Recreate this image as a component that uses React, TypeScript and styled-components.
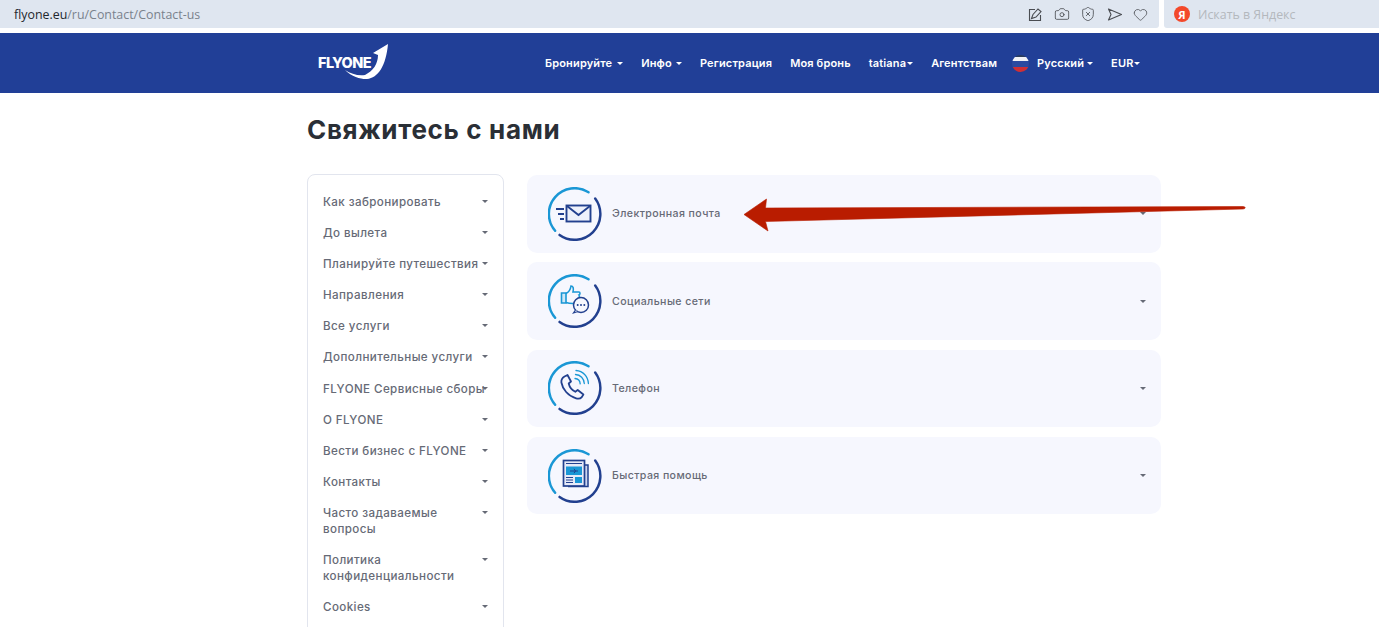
import React from "react";
import styled, { createGlobalStyle } from "styled-components";
import { Camera, ShieldX, Heart } from "lucide-react";

const Global = createGlobalStyle`
  html, body { margin: 0; padding: 0; background: #fff; }
  body { width: 1379px; height: 627px; overflow: hidden; font-family: Inter, "Noto Sans", sans-serif; }
`;

const Page = styled.div`
  position: relative;
  width: 1379px;
  height: 627px;
  overflow: hidden;
`;

const BrowserBar = styled.div`
  display: flex;
  gap: 5px;
  height: 28px;
  margin-bottom: 5px;
`;

const AddressBar = styled.div`
  flex: 0 0 1159px;
  display: flex;
  align-items: center;
  justify-content: space-between;
  box-sizing: border-box;
  padding: 0 11px 0 14px;
  background: #dfe6f0;
  border-bottom-right-radius: 3px;
`;

const Url = styled.div`
  font-family: "Open Sans", sans-serif;
  font-size: 12.4px;
  color: #7a828c;
  b { font-weight: 400; color: #23272c; }
`;

const BarIcons = styled.div`
  display: flex;
  align-items: center;
  gap: 10.5px;
  color: #4a4d52;
`;

const SearchBar = styled.div`
  flex: 1;
  display: flex;
  align-items: center;
  gap: 8px;
  padding-left: 10px;
  background: #dfe6f0;
  border-bottom-left-radius: 3px;
  font-family: "Open Sans", sans-serif;
  font-size: 12.4px;
  color: #b4b8bd;
`;

const YaBadge = styled.span`
  display: flex;
  align-items: center;
  justify-content: center;
  width: 16px;
  height: 16px;
  border-radius: 50%;
  background: #f3492b;
  color: #fff;
  font-size: 11px;
  font-weight: 700;
`;

const Header = styled.header`
  height: 60px;
  background: #213f97;
  display: flex;
  align-items: center;
  padding-left: 318px;
`;

const Logo = styled.div`
  position: relative;
  width: 227px;
  color: #fff;
  font-size: 14.5px;
  font-weight: 800;
  letter-spacing: -0.6px;
  line-height: 16px;
`;

const LogoMark = styled.svg`
  position: absolute;
  left: 22px;
  top: -15px;
`;

const Nav = styled.nav`
  display: flex;
  align-items: center;
  gap: 18px;
`;

const NavItem = styled.span<{ $gap?: number }>`
  display: inline-flex;
  align-items: center;
  gap: ${(p) => p.$gap ?? 4}px;
  color: #fff;
  font-size: 11px;
  font-weight: 600;
  letter-spacing: 0.15px;
  white-space: nowrap;
`;

const Caret = styled.i<{ $color?: string }>`
  display: inline-block;
  flex: none;
  width: 0;
  height: 0;
  border-left: 3px solid transparent;
  border-right: 3px solid transparent;
  border-top: 3px solid ${(p) => p.$color ?? "#fff"};
`;

const Flag = styled.span`
  width: 17px;
  height: 17px;
  border-radius: 50%;
  margin: 0 5px 0 -3px;
  background: linear-gradient(#2a3c5e 0 12%, #f1f2f6 12% 38%, #2b4aa0 38% 68%, #cf2f35 68% 100%);
`;

const Main = styled.main`
  width: 854px;
  margin-left: 307px;
`;

const Title = styled.h1`
  margin: 22px 0 29px;
  font-size: 26px;
  line-height: 30px;
  font-weight: 700;
  color: #2a2f36;
  letter-spacing: 0.65px;
`;

const Columns = styled.div`
  display: flex;
  align-items: flex-start;
  gap: 23px;
`;

const Sidebar = styled.aside`
  flex: 0 0 197px;
  min-width: 0;
  box-sizing: border-box;
  display: flex;
  flex-direction: column;
  gap: 15.1px;
  padding: 19px 15px 40px;
  border: 1px solid #e2e5ee;
  border-radius: 8px;
`;

const SideItem = styled.div`
  display: flex;
  justify-content: space-between;
  align-items: flex-start;
  font-size: 11.6px;
  line-height: 16px;
  font-weight: 500;
  letter-spacing: 0.4px;
  color: #666a76;
  span { flex: 1; width: 0; min-width: 0; white-space: pre; }
  i { margin-top: 6px; }
`;

const Cards = styled.section`
  flex: 1;
  min-width: 0;
  display: flex;
  flex-direction: column;
  gap: 9.75px;
  padding-top: 1px;
`;

const Card = styled.div`
  display: flex;
  align-items: center;
  box-sizing: border-box;
  height: 77.5px;
  padding: 0 15px 0 21px;
  background: #f6f7fe;
  border-radius: 10px;
`;

const CardIcon = styled.svg`
  flex: none;
  margin-right: 10px;
`;

const CardLabel = styled.span`
  flex: 1;
  font-size: 10.6px;
  font-weight: 500;
  color: #666a76;
  letter-spacing: 0.4px;
`;

const ArrowOverlay = styled.svg`
  position: absolute;
  left: 0;
  top: 0;
  pointer-events: none;
`;

const navy = "#22408f";
const sky = "#1a97d5";

const Ring = () => (
  <g fill="none" strokeWidth="2.4" strokeLinecap="round" transform="translate(26.6 27) scale(1.03) translate(-27 -27)">
    <path d="M40.5 5.9A25 25 0 0 0 8.1 43.3" stroke={sky} />
    <path d="M47 12A25 25 0 0 1 12.4 47.3" stroke={navy} />
  </g>
);

const IconBase = ({ children }: { children: React.ReactNode }) => (
  <CardIcon width="54" height="54" viewBox="0 0 54 54">
    <Ring />
    {children}
  </CardIcon>
);

const MailIcon = () => (
  <IconBase>
    <rect x="18.5" y="18.5" width="24" height="16" fill="#eef1fb" stroke={navy} strokeWidth="1.9" />
    <path d="M19 19l11.500 9 11.500-9" fill="none" stroke={navy} strokeWidth="1.9" />
    <path d="M8 22h8M10 27h6M12 32h4" stroke={navy} strokeWidth="1.8" />
  </IconBase>
);

const SocialIcon = () => (
  <IconBase>
    <path d="M13.5 19h4.500v10h-4.500z" fill="#cfe8f7" stroke={sky} strokeWidth="1.6" />
    <path d="M18 19.500c3-1.500 4.500-4 5-7.500 2 0 3 2 2 6h6c1.200 0 1.400 2.600 0 3 .800 1 .400 2.600-.600 2.800M18 28.500c3 1 5 1 7 1" fill="none" stroke={sky} strokeWidth="1.6" />
    <circle cx="33" cy="31" r="7.500" fill="#f6f7fe" stroke={navy} strokeWidth="1.500" />
    <path d="M27.500 36l-2 3 4.500-1.500" fill="#f6f7fe" stroke={navy} strokeWidth="1.200" />
    <circle cx="29.700" cy="31" r="1" fill={navy} />
    <circle cx="33" cy="31" r="1" fill={navy} />
    <circle cx="36.300" cy="31" r="1" fill={navy} />
  </IconBase>
);

const PhoneIcon = () => (
  <IconBase>
    <path d="M16.500 15.500l3-1.500 3.500 6.500-2.300 2c.800 3.400 3.400 6.800 6.600 8.300l2.400-1.800 5.700 4.500-1.600 2.600c-1.400 1.600-3.600 1.900-5.700 1.200C20 35 14.500 28 13.400 21.500c-.300-2.500 1-4.800 3.100-6z" fill="none" stroke={navy} strokeWidth="1.800" strokeLinejoin="round" />
    <path d="M27 17.500c2.800.200 5 2.400 5.200 5.400M27.500 13.500c5 .300 8.500 4 8.800 9M28 9.500c7 .400 12 6 12.400 13" fill="none" stroke={sky} strokeWidth="1.300" strokeLinecap="round" />
  </IconBase>
);

const NewsIcon = () => (
  <IconBase>
    <path d="M36 16h4v21.500H20" fill="#cdd6ef" stroke={navy} strokeWidth="1.500" />
    <rect x="15.500" y="11.500" width="21" height="25.500" fill="#e6eaf8" stroke={navy} strokeWidth="1.700" />
    <rect x="18" y="17.500" width="16" height="8.500" fill={sky} />
    <path d="M22 22h8M26 19.800l1.500 2.200-1.500 2.200" fill="none" stroke={navy} strokeWidth="1" />
    <path d="M18 14.500h16M18 28.500h7M18 31h7M18 33.500h7" stroke={navy} strokeWidth="1.100" />
    <rect x="27" y="28" width="7" height="6" fill={sky} />
  </IconBase>
);

const menu = [
  "Как забронировать",
  "До вылета",
  "Планируйте путешествия",
  "Направления",
  "Все услуги",
  "Дополнительные услуги",
  "FLYONE Сервисные сборы",
  "О FLYONE",
  "Вести бизнес с FLYONE",
  "Контакты",
  "Часто задаваемые\nвопросы",
  "Политика\nконфиденциальности",
  "Cookies",
];

const cards = [
  { label: "Электронная почта", Icon: MailIcon },
  { label: "Социальные сети", Icon: SocialIcon },
  { label: "Телефон", Icon: PhoneIcon },
  { label: "Быстрая помощь", Icon: NewsIcon },
];

export default function App() {
  return (
    <Page>
      <Global />
      <BrowserBar>
        <AddressBar>
          <Url><b>flyone.eu</b>/ru/Contact/Contact-us</Url>
          <BarIcons>
            <svg width="15" height="15" viewBox="0 0 15 15" fill="none" stroke="currentColor" strokeWidth="1.1">
              <path d="M7 2.500H1.500v11h11V8" />
              <path d="M3.500 11.500l1.500-4 5-5.500 3 2.500-5 5.500z" />
            </svg>
            <Camera size={16} strokeWidth={1.25} />
            <ShieldX size={16} strokeWidth={1.25} />
            <svg width="16" height="15" viewBox="0 0 16 15" fill="none" stroke="currentColor" strokeWidth="1.1" strokeLinejoin="round">
              <path d="M1.500 2l13 5.500-13 5.500 2.500-5.500z" />
            </svg>
            <Heart size={15} strokeWidth={1.25} />
          </BarIcons>
        </AddressBar>
        <SearchBar>
          <YaBadge>Я</YaBadge>
          Искать в Яндекс
        </SearchBar>
      </BrowserBar>

      <Header>
        <Logo>
          FLYONE
          <LogoMark width="50" height="40" viewBox="0 0 50 40">
            <path d="M5 30C12 37 22 39.500 27 39C38 38 46 26 48 4L33 13L38 15C38 24 33 31 25 35C18 36 11 34 5 30Z" fill="#fff" />
          </LogoMark>
        </Logo>
        <Nav>
          <NavItem $gap={5}>Бронируйте <Caret /></NavItem>
          <NavItem>Инфо <Caret /></NavItem>
          <NavItem>Регистрация</NavItem>
          <NavItem>Моя бронь</NavItem>
          <NavItem $gap={1}>tatiana<Caret /></NavItem>
          <NavItem>Агентствам</NavItem>
          <NavItem $gap={3}>
            <Flag />
            Русский <Caret />
          </NavItem>
          <NavItem $gap={1}>EUR<Caret /></NavItem>
        </Nav>
      </Header>

      <Main>
        <Title>Свяжитесь с нами</Title>
        <Columns>
          <Sidebar>
            {menu.map((m) => (
              <SideItem key={m}>
                <span>{m}</span>
                <Caret $color="#666a76" />
              </SideItem>
            ))}
          </Sidebar>
          <Cards>
            {cards.map(({ label, Icon }) => (
              <Card key={label}>
                <Icon />
                <CardLabel>{label}</CardLabel>
                <Caret $color="#666a76" />
              </Card>
            ))}
          </Cards>
        </Columns>
      </Main>

      <ArrowOverlay width="1379" height="627" viewBox="0 0 1379 627">
        <path d="M744 214.500L766.500 199 765.500 208 1243 206.500c3 .500 3 2 0 2.500L765.500 221.500 768 231z" fill="#b91c00" stroke="#b91c00" strokeWidth="0.6" strokeLinejoin="round" />
      </ArrowOverlay>
    </Page>
  );
}
